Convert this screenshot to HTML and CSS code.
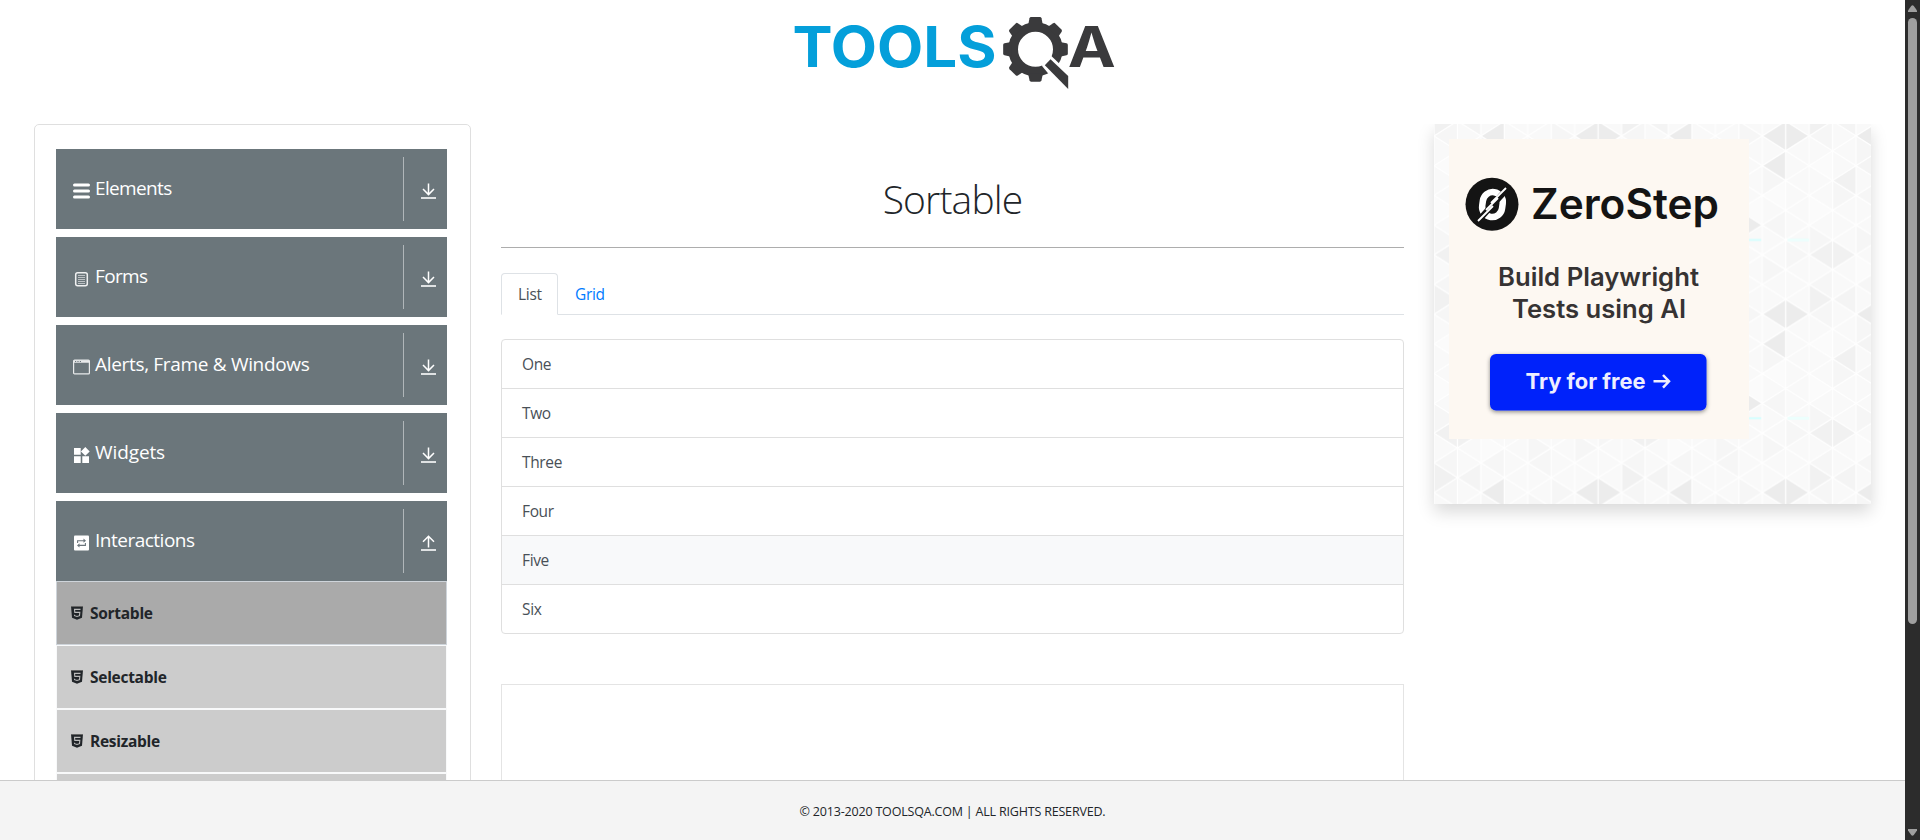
FILE: index.html
```html
<!DOCTYPE html>
<html lang="en">
<head>
<meta charset="utf-8">
<title>ToolsQA - Sortable</title>
<link rel="stylesheet" href="styles.css">
</head>
<body>
<svg class="defs" aria-hidden="true">
  <symbol id="i-down" viewBox="0 0 16 16"><path d="M7.5 .5v11M2 6l5.5 5.6L13 6" fill="none" stroke="#fff" stroke-width="1.5"/><path d="M0 15h15" stroke="#dfe2e3" stroke-width="2"/></symbol>
  <symbol id="i-up" viewBox="0 0 16 16"><path d="M7.5 12.5v-11M2 6.8l5.5-5.6L13 6.8" fill="none" stroke="#fff" stroke-width="1.5"/><path d="M0 15h15" stroke="#dfe2e3" stroke-width="2"/></symbol>
  <symbol id="i-html" viewBox="0 0 12 14"><path d="M0 0h12l-1 11.7-5 2-5-2z" fill="#212529"/><path d="M0 .5h12" stroke="#666" stroke-width="1"/><path d="M9.5 3.4h-6l.3 3h5l-.3 3.3-2.5.8-2.4-.8-.1-1" fill="none" stroke="#bbb" stroke-width="1.1"/></symbol>
</svg>
<div class="page">
  <header class="header">
    <svg class="logo" viewBox="-7.5 0 1050 330" role="img" aria-label="ToolsQA">
      <text class="logo-tools" x="36" y="200" textLength="612" lengthAdjust="spacingAndGlyphs">TOOLS</text>
      <g fill="#3a3a3c">
        <circle cx="765" cy="148" r="67" fill="none" stroke="#3a3a3c" stroke-width="29"/>
        <path id="tooth" d="M743 75l4-20q1-4 5-4h26q4 0 5 4l4 20z"/>
        <use href="#tooth" transform="rotate(45 765 148)"/>
        <use href="#tooth" transform="rotate(90 765 148)"/>
        <use href="#tooth" transform="rotate(180 765 148)"/>
        <use href="#tooth" transform="rotate(225 765 148)"/>
        <use href="#tooth" transform="rotate(270 765 148)"/>
        <use href="#tooth" transform="rotate(315 765 148)"/>
        <path d="M810 166l62 58v56l-10-3-60-58-18-22z" fill="#fff"/>
        <path d="M810 178l53 50v39l-70-71z"/>
      </g>
      <text class="logo-a" x="862" y="200" textLength="144" lengthAdjust="spacingAndGlyphs">A</text>
    </svg>
  </header>

  <div class="columns">
    <nav class="sidebar">
      <div class="group"><div class="group-title"><svg width="17" height="16"><path d="M1.5 2h14M1.5 8h14M1.5 14h14" stroke="#fff" stroke-width="3" stroke-linecap="round"/></svg><span class="t-elements">Elements</span></div><svg class="arrow"><use href="#i-down"/></svg></div>
      <div class="group"><div class="group-title"><svg width="17" height="16"><rect x="2.7" y="1.7" width="11.6" height="13" rx="2" fill="none" stroke="#f0f1f2" stroke-width="1.5"/><path d="M5 4.5h7M5 6.5h7M5 8.5h7M5 10.5h7M5 12.500h7" stroke="#bcc1c4"/></svg><span class="t-forms">Forms</span></div><svg class="arrow"><use href="#i-down"/></svg></div>
      <div class="group"><div class="group-title"><svg width="17" height="16"><rect x=".6" y="1.1" width="15.8" height="13.8" rx="1" fill="none" stroke="#e8eaeb" stroke-width="1.2"/><path d="M1 2.5h15" stroke="#e8eaeb" stroke-width="2.5"/><path d="M2 2.5h1.2M4.4 2.5h1.2M6.8 2.5h1.2" stroke="#6c767c"/></svg><span class="t-alerts">Alerts, Frame &amp; Windows</span></div><svg class="arrow"><use href="#i-down"/></svg></div>
      <div class="group"><div class="group-title"><svg width="17" height="16"><path d="M1 1h6.7v6.7H1zM1 9.2h6.7V16H1zM9.3 9.2H16V16H9.300zM12.300 0l4.400 4.400-4.400 4.400-4.400-4.400z" fill="#fff"/></svg><span class="t-widgets">Widgets</span></div><svg class="arrow"><use href="#i-down"/></svg></div>
      <div class="group open"><div class="group-title"><svg width="17" height="16"><rect x="1" y=".5" width="15" height="15" rx="1" fill="#fff"/><path d="M4.600 8V5.700h6.500M12.400 8v2.400H6" fill="none" stroke="#6c767c" stroke-width="1.100"/><path d="M10.500 3.600l2.500 2.100-2.500 2.100zM6.500 8.300L4 10.400l2.500 2.100z" fill="#6c767c"/></svg><span class="t-interactions">Interactions</span></div><svg class="arrow"><use href="#i-up"/></svg></div>
      <ul class="submenu">
        <li class="active"><svg><use href="#i-html"/></svg><span>Sortable</span></li>
        <li><svg><use href="#i-html"/></svg><span>Selectable</span></li>
        <li><svg><use href="#i-html"/></svg><span>Resizable</span></li>
        <li></li>
      </ul>
    </nav>

    <main class="main">
      <h1>Sortable</h1>
      <div class="tabs"><a class="tab current">List</a><a class="tab">Grid</a></div>
      <ul class="list">
        <li>One</li><li>Two</li><li>Three</li><li>Four</li><li class="hover">Five</li><li>Six</li>
      </ul>
      <div class="panel"></div>
    </main>

    <aside class="promo">
      <svg width="437" height="380" viewBox="0 0 437 380">
        <defs>
          <pattern id="tri" width="192" height="180" patternUnits="userSpaceOnUse" patternTransform="translate(0 -2.9) scale(.977 .9905)">
            <rect width="192" height="180" fill="#f9f9f9"/>
            <g fill="#f6f6f6">
              <path d="M24 0v30L0 15zM24 60l24 15-24 15zM72 30L48 45v-30zM72 60v30L48 75zM96 75l24-15v30zM120 0l24 15-24 15zM144 45l24 15-24 15zM168 90v30l-24-15zM48 105l24 15-24 15zM0 105l24 15-24 15zM96 135l24 15-24 15zM72 150v30l-24-15zM144 135l24 15-24 15zM168 120l24 15-24 15zM120 150v30l-24-15zM96 15l24 15-24 15zM24 150v30L0 165z"/>
            </g>
            <path fill="#fbfbfb" d="M24 30v30L0 45zM96 45v30L72 60zM144 75v30l-24-15zM48 135l24 15-24 15zM168 60v30l-24-15zM72 90l24 15-24 15zM0 75l24 15-24 15z"/>
            <path fill="#f1f1f1" d="M24 120l24 15-24 15L0 135zM48 45v30L24 60zM0 0v15L24 0zM0 165v15h24z"/>
            <path fill="#f4f4f4" d="M72 30v30L48 45zM48 0v15L24 0zM48 165v15H24z"/>
            <path fill="#ececec" d="M168 0l24 15-24 15-24-15zM168 30v30l-24-15zM72 0v30L48 15zM120 90l24 15-24 15z"/>
            <path d="M0 0v180M24 0v180M48 0v180M72 0v180M96 0v180M120 0v180M144 0v180M168 0v180M192 0v180" stroke="#fff" stroke-width="1.3"/>
            <path d="M-24 -30L192 105M-24 0L192 135M-24 30L192 165M-24 60L192 195M-24 90L192 225M-24 120L192 255M-24 150L192 285M-24 180L192 315M0 -45L192 75M48 -45L192 45M96 -45L192 15M-24 30L192 -105M-24 60L192 -75M-24 90L192 -45M-24 120L192 -15M-24 150L192 15M-24 180L192 45M-24 210L192 75M0 225L192 105M0 255L192 135M0 285L192 165" stroke="#fff" stroke-width="1.3"/>
            <path d="M130 120h13" stroke="#d5ffff" stroke-width="2"/><path d="M170 120h22" stroke="#ecfffd" stroke-width="3"/>
          </pattern>
          <filter id="sh" x="-10%" y="-20%" width="120%" height="150%"><feDropShadow dx="0" dy="1.500" stdDeviation="2" flood-color="#000" flood-opacity=".45"/></filter>
        </defs>
        <rect width="437" height="380" fill="url(#tri)"/>
        <rect x="15" y="15" width="300" height="300" fill="#fdf8f2"/>
        <circle cx="58" cy="80.300" r="26.500" fill="#141414"/>
        <rect x="48.500" y="68" width="20" height="25" rx="10" fill="none" stroke="#fff" stroke-width="6.500" transform="rotate(8 58 80.300)"/>
        <path d="M44 97l30-33" stroke="#141414" stroke-width="6"/>
        <path d="M44 97l15-15M57 79l15-15M52 86l12-12" stroke="#fff" stroke-width="1.800"/>
        <text class="ad-brand" x="97" y="95" textLength="188" lengthAdjust="spacingAndGlyphs">ZeroStep</text>
        <text class="ad-copy" x="64" y="162" textLength="201" lengthAdjust="spacingAndGlyphs">Build Playwright</text>
        <text class="ad-copy" x="78" y="193.500" textLength="174" lengthAdjust="spacingAndGlyphs">Tests using AI</text>
        <rect x="56" y="230" width="216.500" height="56.500" rx="6" fill="#0024fa" filter="url(#sh)"/>
        <text class="ad-cta" x="91.500" y="265" textLength="120" lengthAdjust="spacingAndGlyphs">Try for free</text>
        <path d="M219.500 257.300h15M229 251l6 6.300-6 6.300" fill="none" stroke="#eef" stroke-width="2.500"/>
      </svg>
    </aside>
  </div>

  <footer class="footer"><span>© 2013-2020 TOOLSQA.COM | ALL RIGHTS RESERVED.</span></footer>
</div>
<div class="scrollbar">
  <svg width="9" height="7"><path d="M3.200 1Q4.500-.5 5.800 1L9 5.500V7H0V5.500z" fill="#9f9f9f"/></svg>
  <div class="thumb"></div>
  <svg width="9" height="7"><path d="M3.200 6Q4.500 7.500 5.800 6L9 1.500V0H0v1.500z" fill="#9f9f9f"/></svg>
</div>
</body>
</html>
```
FILE: styles.css
```css
* { box-sizing: border-box; }
html, body { height: 100%; }
body {
  margin: 0;
  display: flex;
  overflow: hidden;
  background: #fff;
  color: #212529;
  font-family: "Open Sans", "Noto Sans", sans-serif;
  font-size: 16px;
  line-height: 24px;
}
ul { list-style: none; margin: 0; padding: 0; }
svg { display: block; flex: none; }
.defs { position: absolute; width: 0; height: 0; }

.page { flex: 1; height: 840px; display: flex; flex-direction: column; }
.header { height: 124px; flex: none; display: flex; justify-content: center; align-items: flex-start; }
.logo { width: 350px; height: 110px; }
.logo-tools { font: 700 168px Inter, sans-serif; fill: #049fda; }
.logo-a { font: 700 168px Inter, sans-serif; fill: #3a3a3c; }

.columns { flex: 1; min-height: 0; overflow: hidden; display: grid; grid-template-columns: 437px 903px 437px; column-gap: 30px; padding-left: 34px; }
.sidebar { height: 720px; border: 1px solid #dfdfdf; border-radius: 5px; padding: 24px 23px 0 21px; }
.group { height: 80px; margin-bottom: 8px; padding: 8px 10px 8px 17px; background: #6b767b; color: #fff; display: flex; align-items: center; }
.group.open { margin-bottom: 0; }
.group-title { flex: 1; height: 64px; display: flex; align-items: center; gap: 5px; border-right: 1px solid #b0b6b9; font-size: 19px; }
.group-title svg { margin-top: 3px; }
.group-title span { margin-top: -3px; letter-spacing: -.65px; white-space: nowrap; }
.group-title .t-alerts { letter-spacing: -.32px; }
.group-title .t-widgets { letter-spacing: -.1px; }
.group-title .t-interactions { letter-spacing: -.5px; }
.arrow { width: 16px; height: 16px; margin: 4px 0 0 17px; }
.submenu li { height: 64px; border: 1px solid #f8f9fa; background: #ccc; display: flex; align-items: center; gap: 7px; padding-left: 14px; font-weight: 700; font-size: 15.5px; letter-spacing: -.28px; }
.submenu li.active { background: #aaa; border-color: #ced4da; }
.submenu svg { width: 12px; height: 14px; }

.main { display: flex; flex-direction: column; }
.main h1 { margin: 0; height: 124px; padding-top: 50px; border-bottom: 1px solid #adadad; text-align: center; font-size: 39px; line-height: 50px; font-weight: 300; letter-spacing: -.85px; }
.tabs { margin-top: 25px; height: 42px; flex: none; display: flex; border-bottom: 1px solid #dee2e6; }
.tab { height: 42px; padding: 8px 16px 0; border: 1px solid transparent; color: #007bff; font-size: 15.5px; letter-spacing: -.3px; }
.tab.current { width: 57px; color: #495057; background: #fff; border-color: #dee2e6 #dee2e6 #fff; border-radius: 4px 4px 0 0; }
.list { margin-top: 24px; flex: none; border: 1px solid #dfdfdf; border-radius: 4px; color: #495057; overflow: hidden; }
.list li { height: 49px; padding: 12px 20px; border-bottom: 1px solid #dfdfdf; font-size: 15.5px; letter-spacing: -.35px; }
.list li:last-child { border-bottom: 0; height: 48px; }
.list .hover { background: #f8f9fa; }
.panel { margin-top: 50px; flex: none; height: 300px; border: 1px solid #e4e4e4; }

.promo { width: 437px; height: 380px; box-shadow: 0 8px 16px rgba(0, 0, 0, .15); }
.ad-brand { font: 600 42px Inter, sans-serif; fill: #141414; }
.ad-copy { font: 600 25px Inter, sans-serif; fill: #363333; }
.ad-cta { font: 700 21.5px Inter, sans-serif; fill: #eef; }

.footer { height: 60px; flex: none; background: #f4f4f4; border-top: 1px solid #cbcbcb; display: flex; justify-content: center; align-items: center; font-size: 12.5px; padding-top: 3px; }
.footer span { letter-spacing: -.19px; }

.scrollbar { width: 15px; height: 840px; background: #2c2c2c; display: flex; flex-direction: column; align-items: center; padding: 5px 0 4px; }
.thumb { width: 9px; height: 606px; margin: 6px 0 auto; border-radius: 5px; background: #9f9f9f; }
```
